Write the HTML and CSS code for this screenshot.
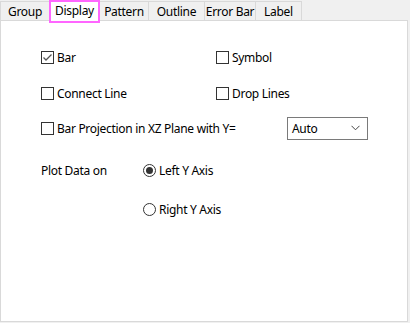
FILE: index.html
```html
<!DOCTYPE html>
<html>
<head>
<meta charset="utf-8">
<link rel="stylesheet" href="styles.css">
</head>
<body>
<div class="dialog">
  <div class="tabs">
    <div class="tab t-group">Group</div>
    <div class="tab t-display active">Display</div>
    <div class="tab t-pattern">Pattern</div>
    <div class="tab t-outline">Outline</div>
    <div class="tab t-error">Error Bar</div>
    <div class="tab t-label">Label</div>
  </div>
  <div class="panel">
    <div class="row r1">
      <label class="check col-l"><span class="box checked"><svg viewBox="0 0 13 13" width="13" height="13"><path d="M2.5 6.5 L5 9 L10.5 3.5" fill="none" stroke="#555" stroke-width="1.3"/></svg></span>Bar</label>
      <label class="check col-r"><span class="box"></span>Symbol</label>
    </div>
    <div class="row r2">
      <label class="check col-l"><span class="box"></span>Connect Line</label>
      <label class="check col-r"><span class="box"></span>Drop Lines</label>
    </div>
    <div class="row r3">
      <label class="check col-wide"><span class="box"></span>Bar Projection in XZ Plane with Y=</label>
      <div class="select"><span>Auto</span><svg width="9" height="6" viewBox="0 0 9 6"><path d="M0.5 0.8 L4.5 4.8 L8.5 0.8" fill="none" stroke="#444" stroke-width="1"/></svg></div>
    </div>
    <div class="row r4">
      <span class="plabel">Plot Data on</span>
      <label class="radio"><span class="circle on"></span>Left Y Axis</label>
    </div>
    <div class="row r5">
      <span class="plabel"></span>
      <label class="radio"><span class="circle"></span>Right Y Axis</label>
    </div>
  </div>
</div>
</body>
</html>
```

FILE: styles.css
```css
html, body {
  margin: 0;
  padding: 0;
}
body {
  background: #f0f0f0;
  font-family: "Noto Sans", "Open Sans", sans-serif;
  font-size: 12px;
  letter-spacing: -0.3px;
  color: #000;
  width: 410px;
  height: 323px;
  overflow: hidden;
}
.dialog {
  width: 408px;
}
.tabs {
  display: flex;
  height: 20px;
  align-items: flex-end;
  position: relative;
  z-index: 2;
}
.tab {
  box-sizing: border-box;
  height: 19px;
  border: 1px solid #d9d9d9;
  border-bottom: none;
  border-right: none;
  background: #f0f0f0;
  display: flex;
  align-items: center;
  justify-content: center;
  padding-top: 1px;
  white-space: nowrap;
}
.t-group { width: 49px; }
.t-pattern { width: 48px; border-left: none; }
.t-outline { width: 56px; }
.t-error { width: 51px; }
.t-label { width: 47px; border-right: 1px solid #d9d9d9; }
.tab.active {
  width: 51px;
  height: 23px;
  margin-bottom: -3px;
  background: #fff;
  border: 2px solid #ff66ff;
  align-items: flex-start;
  padding-top: 0;
  line-height: 17px;
}
.panel {
  box-sizing: border-box;
  height: 302px;
  background: #fff;
  border: 1px solid #d9d9d9;
  padding-top: 29px;
  padding-left: 40px;
}
.row {
  display: flex;
  align-items: center;
}
.r1 { height: 15px; }
.r2 { height: 15px; margin-top: 21px; }
.r3 { height: 22px; margin-top: 16px; }
.r4 { height: 15px; margin-top: 24px; }
.r5 { height: 15px; margin-top: 24px; }
.check, .radio {
  display: flex;
  align-items: center;
  white-space: nowrap;
}
.col-l { width: 175px; }
.col-wide { width: 246px; }
.box {
  box-sizing: border-box;
  width: 13px;
  height: 13px;
  border: 1px solid #333;
  margin-right: 3px;
  display: inline-flex;
  align-items: center;
  justify-content: center;
  background: #fff;
}
.box svg { display: block; margin: -1px; }
.select {
  box-sizing: border-box;
  width: 81px;
  height: 23px;
  border: 1px solid #7a7a7a;
  display: flex;
  align-items: center;
  justify-content: space-between;
  padding: 0 7px 0 4px;
  background: #fff;
}
.plabel { width: 102px; }
.circle {
  box-sizing: border-box;
  width: 13px;
  height: 13px;
  border: 1px solid #333;
  border-radius: 50%;
  margin-right: 3px;
  display: inline-flex;
  align-items: center;
  justify-content: center;
}
.circle.on::after {
  content: "";
  width: 7px;
  height: 7px;
  border-radius: 50%;
  background: #333;
}
```
